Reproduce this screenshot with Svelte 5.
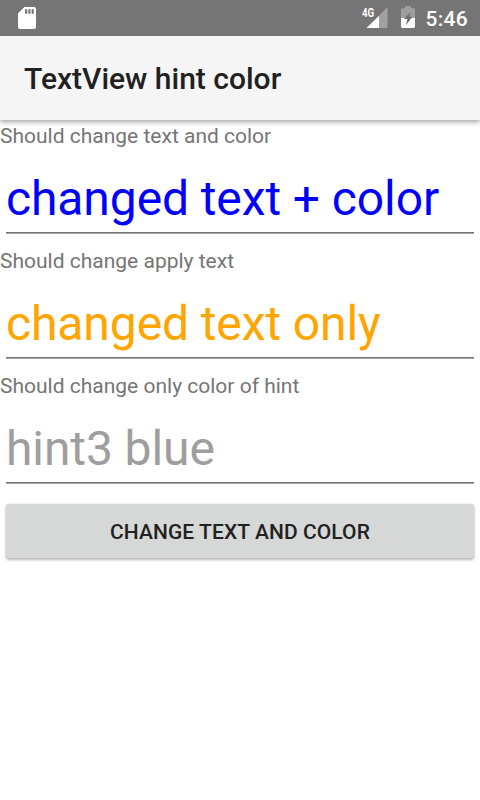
<script>
  let fields = $state([
    { label: 'Should change text and color', value: 'changed text + color', hint: '', color: '#0000ff' },
    { label: 'Should change apply text', value: 'changed text only', hint: '', color: '#ffa500' },
    { label: 'Should change only color of hint', value: '', hint: 'hint3 blue', color: '#212121' }
  ]);
</script>

<div class="screen">
  <div class="status">
    <svg class="sd" width="18" height="22" viewBox="0 0 18 22">
      <path fill="#fff" fill-rule="evenodd" d="M6.4 0H16a2 2 0 0 1 2 2v18a2 2 0 0 1-2 2H2a2 2 0 0 1-2-2V6.4zM7 2.2v4.6h2.2V2.2zm3.3 0v4.6h2.2V2.2zm3.3 0v4.6h2.2V2.2z" />
    </svg>
    <div class="right">
      <div class="signal">
        <span class="network">4G</span>
        <svg width="22" height="21" viewBox="0 0 22 21">
          <path fill="#fff" fill-opacity=".32" d="M13 8.7L21.5 0v21H13z" />
          <path fill="#fff" d="M0.5 21L13 8.7V21z" />
        </svg>
      </div>
      <svg class="battery" width="14" height="22" viewBox="0 0 14 22">
        <path fill="#9e9e9e" d="M4 0h6v2.2h2.6Q14 2.2 14 3.6V12H0V3.6q0-1.4 1.4-1.4H4z" />
        <path fill="#fff" d="M0 12h14v8.6q0 1.4-1.4 1.4H1.4Q0 22 0 20.6z" />
        <path fill="#6f6f6f" d="M9.6 5.8L3 13h3.4L5 19.2l6.4-8.4H8.2z" />
      </svg>
      <span class="clock">5:46</span>
    </div>
  </div>
  <header><h1>TextView hint color</h1></header>
  <main>
    {#each fields as field}
      <label>
        <span>{field.label}</span>
        <input type="text" bind:value={field.value} placeholder={field.hint} style:color={field.color} spellcheck="false" />
      </label>
    {/each}
    <button>CHANGE TEXT AND COLOR</button>
  </main>
</div>

<style>
  :global(body) { background: #fff; }
  .screen {
    width: 480px;
    height: 800px;
    overflow: hidden;
    font-family: Roboto, sans-serif;
  }
  .status {
    position: relative;
    z-index: 1;
    display: flex;
    justify-content: space-between;
    height: 36px;
    background: #757575;
    color: #fff;
  }
  .sd { margin: 7px 0 0 18px; }
  .right { display: flex; padding-right: 12px; }
  .signal { position: relative; width: 27px; margin-right: 13px; }
  .signal svg { display: block; margin: 7px 0 0 5px; }
  .network {
    position: absolute;
    top: 6px;
    left: 1px;
    font-size: 12.5px;
    line-height: 13px;
    font-weight: 700;
    transform: scaleX(.78);
    transform-origin: left;
  }
  .battery { margin: 6px 10px 0 0; }
  .clock { font-size: 21px; line-height: 38px; font-weight: 500; letter-spacing: .3px; }
  header {
    position: relative;
    display: flex;
    align-items: center;
    box-sizing: border-box;
    height: 84px;
    padding: 2px 0 0 24px;
    background: #f5f5f5;
    box-shadow: 0 2px 5px rgba(0, 0, 0, .36);
  }
  h1 { margin: 0; font-size: 30px; line-height: 36px; font-weight: 500; color: #212121; }
  main { display: flex; flex-direction: column; padding-top: 1px; }
  label { display: flex; flex-direction: column; height: 125px; }
  label span { height: 29px; font-size: 21px; line-height: 31px; color: #757575; }
  input {
    box-sizing: border-box;
    height: 84px;
    margin: 0 6px;
    padding: 12px 0 0;
    border: 0;
    outline: 0;
    background: linear-gradient(#757575 0 1px, #a6a6a6 1px 2px) 0 100% / 100% 2px no-repeat;
    font: 48px/56px Roboto, sans-serif;
    letter-spacing: -.1px;
  }
  input::placeholder { color: #9e9e9e; opacity: 1; }
  button {
    height: 54px;
    margin: 8px 6px 0;
    padding: 2px 0 0;
    border: 0;
    border-radius: 3px;
    background: #d6d8d7;
    box-shadow: 0 2px 3px rgba(0, 0, 0, .27), 0 0 2px rgba(0, 0, 0, .12);
    font: 500 21px/52px Roboto, sans-serif;
    letter-spacing: .08px;
    color: #212121;
  }
</style>
